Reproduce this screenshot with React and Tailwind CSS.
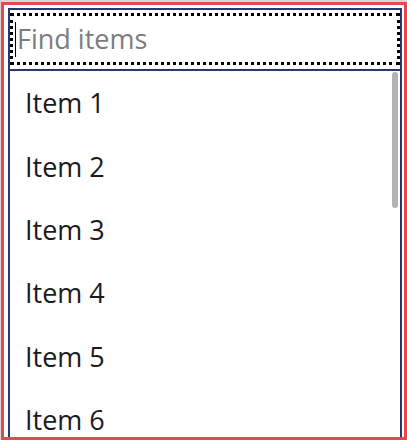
import React from "react";

export default function App() {
  const items = ["Item 1", "Item 2", "Item 3", "Item 4", "Item 5", "Item 6", "Item 7"];
  return (
    <div className="w-[407px] h-[440px] bg-[#d6d6d6] pt-[2px] pl-[1px] overflow-hidden">
      <div className="w-[406px] h-[438px] border-[3px] border-[#e9474c] bg-white pl-[4px] pt-[3px] pr-[2px] overflow-hidden">
        <div className="relative h-[460px] border-2 border-[#2c376b] bg-white flex flex-col" style={{ fontFamily: '"Open Sans", "Noto Sans", sans-serif' }}>
          <div className="pt-[3px] pb-[4px] border-b-2 border-[#2c376b]">
            <div className="h-[52px] border-[3px] border-dotted border-black flex items-center pl-[2px]">
              <span className="w-px h-[35px] bg-black mr-[1px]"></span>
              <span className="text-[27px] leading-none text-[#7d7d7d] mt-[-1px]">Find items</span>
            </div>
          </div>
          <div className="flex flex-col">
            {items.map((t) => (
              <div key={t} className="h-[63.4px] flex items-center pl-[15px] text-[27px] text-[#1b1b1b] leading-none">
                {t}
              </div>
            ))}
          </div>
          <div className="absolute left-[382px] top-[62px] w-[6px] h-[136px] rounded-full bg-[#b3b3b3]"></div>
        </div>
      </div>
    </div>
  );
}
